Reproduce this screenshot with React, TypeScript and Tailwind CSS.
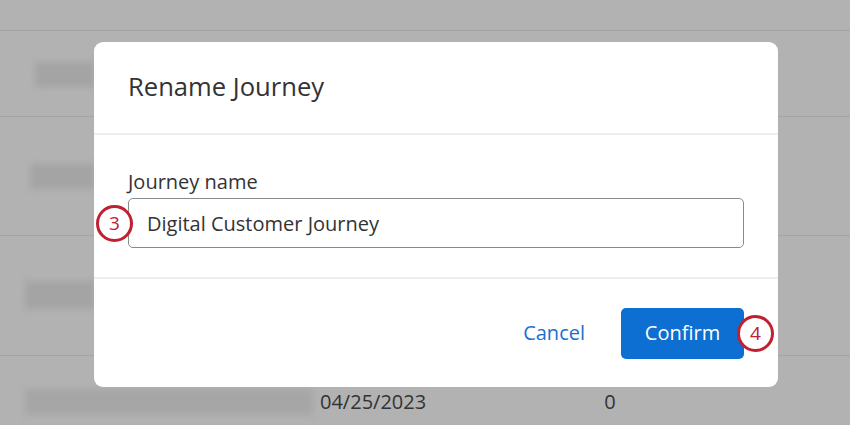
const font = { fontFamily: '"Open Sans", "Noto Sans", sans-serif' }

function Marker({ n, className }: { n: string; className: string }) {
    return (
        <div className={"absolute w-[37px] h-[37px] rounded-full border-[3px] border-[#c0202f] bg-white flex items-center justify-center text-[#c0202f] text-[19px] leading-none " + className}>
            {n}
        </div>
    )
}

function BackgroundTable() {
    return (
        <div className="w-full">
            <div className="h-[31px] border-b border-[#a3a3a3]" />
            <div className="h-[86px] border-b border-[#a3a3a3] pt-[31px] pl-[35px]">
                <div className="w-[60px] h-[25px] bg-[#a4a4a4] blur-[3px]" />
            </div>
            <div className="h-[119px] border-b border-[#a3a3a3] pt-[47px] pl-[30px]">
                <div className="w-[65px] h-[25px] bg-[#a4a4a4] blur-[3px]" />
            </div>
            <div className="h-[120px] border-b border-[#a3a3a3] pt-[45px] pl-[25px]">
                <div className="w-[70px] h-[28px] bg-[#a4a4a4] blur-[3px]" />
            </div>
            <div className="h-[69px] flex items-start pt-[33px]">
                <div className="ml-[25px] w-[288px] h-[26px] bg-[#a6a6a6] blur-[3px]" />
                <p className="ml-[7px] text-[20px] leading-[26px] text-[#333]">04/25/2023</p>
                <p className="ml-[178px] text-[20px] leading-[26px] text-[#333]">0</p>
            </div>
        </div>
    )
}

export default function App() {
    return (
        <div className="relative w-[850px] h-[425px] overflow-hidden bg-[#b2b2b2]" style={font}>
            <BackgroundTable />

            <div className="absolute left-[94px] top-[42px] w-[684px] h-[345px] bg-white rounded-[9px] flex flex-col">
                <div className="h-[93px] border-b-2 border-[#eeeeee] flex items-center pl-[34px]">
                    <h2 className="text-[25.6px] text-[#333]">Rename Journey</h2>
                </div>
                <div className="h-[144px] border-b-2 border-[#eeeeee] px-[34px] pt-[34px]">
                    <label className="block text-[20px] leading-[26px] text-[#333]">Journey name</label>
                    <div className="relative mt-[3px]">
                        <input
                            className="w-full h-[50px] rounded-[5px] border border-[#8a8a8a] px-[18px] text-[20px] text-[#333] outline-none"
                            defaultValue="Digital Customer Journey"
                        />
                        <Marker n="3" className="-left-[32px] top-[7px]" />
                    </div>
                </div>
                <div className="flex-1 flex items-center justify-end pr-[34px] gap-[36px]">
                    <button className="text-[20px] text-[#1a6fcf]">Cancel</button>
                    <div className="relative">
                        <button className="w-[123px] h-[51px] rounded-[5px] bg-[#0c6fd1] text-white text-[20px]">Confirm</button>
                        <Marker n="4" className="left-[116px] top-[7px]" />
                    </div>
                </div>
            </div>
        </div>
    )
}
